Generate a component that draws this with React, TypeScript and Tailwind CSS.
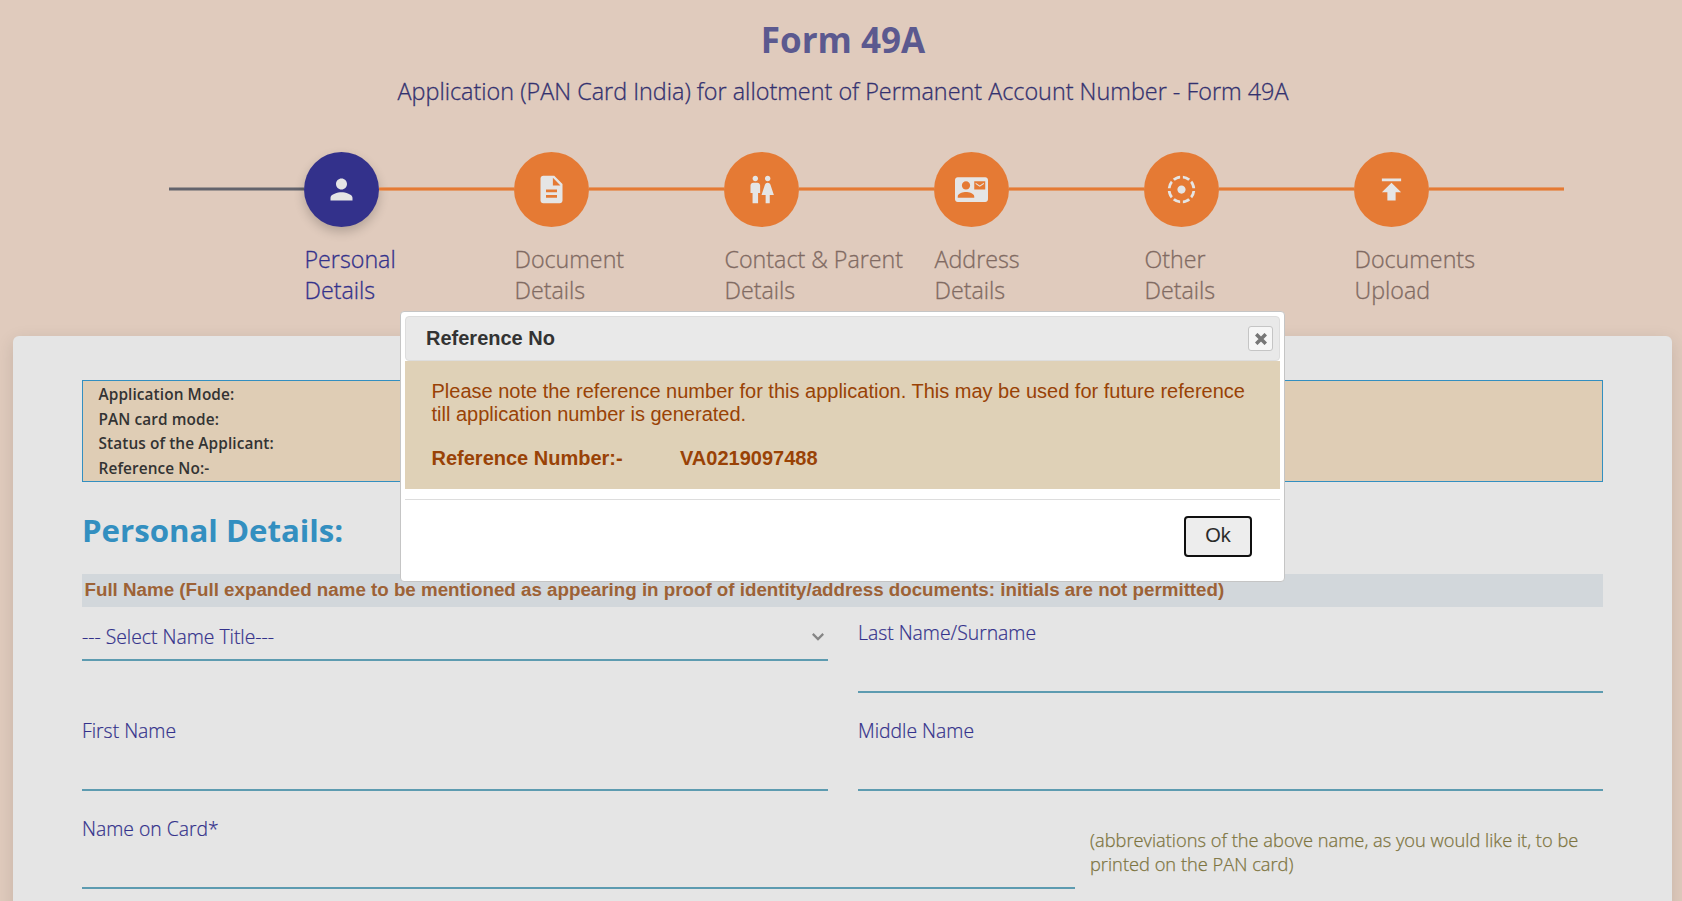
import React from "react";
import {
  MdContactMail,
  MdDescription,
  MdFilterTiltShift,
  MdPerson,
  MdPublish,
  MdWc,
} from "react-icons/md";

const steps = [
  { icon: MdPerson, top: "Personal", bottom: "Details" },
  { icon: MdDescription, top: "Document", bottom: "Details" },
  { icon: MdWc, top: "Contact & Parent", bottom: "Details" },
  { icon: MdContactMail, top: "Address", bottom: "Details" },
  { icon: MdFilterTiltShift, top: "Other", bottom: "Details" },
  { icon: MdPublish, top: "Documents", bottom: "Upload" },
];

const summary = ["Application Mode:", "PAN card mode:", "Status of the Applicant:", "Reference No:-"];

function Stepper() {
  return (
    <div className="mt-[45px] ml-[169px] flex w-[1395px]">
      <div className="mt-[35px] h-[4px] w-[135px] shrink-0 border-y border-[#a09794] bg-[#63636c]" />
      {steps.map(({ icon: Icon, top, bottom }, i) => (
        <div key={top} className="w-[210px] shrink-0">
          <div className="flex items-start">
            <div
              className={
                i === 0
                  ? "flex size-[75px] shrink-0 items-center justify-center rounded-full bg-[#33318b] shadow-[0_5px_11px_rgba(0,0,0,0.2)]"
                  : "flex size-[75px] shrink-0 items-center justify-center rounded-full bg-[#e57a34]"
              }
            >
              <Icon className="size-[33px] text-[#e5e5e5]" />
            </div>
            <div className="mt-[35px] h-[4px] w-[135px] shrink-0 border-y border-[#e39c6c] bg-[#e57a34]" />
          </div>
          <div
            className={
              i === 0
                ? "mt-[17px] -mb-px pl-[0.5px] text-[23.25px] leading-[31px] font-light whitespace-nowrap text-[#33318b] [-webkit-text-stroke:0.3px]"
                : "mt-[17px] -mb-px pl-[0.5px] text-[23.25px] leading-[31px] font-light whitespace-nowrap text-[#806a62] [-webkit-text-stroke:0.3px]"
            }
          >
            {top}
            <br />
            {bottom}
          </div>
        </div>
      ))}
    </div>
  );
}

function Field({ label, width }: { label: string; width: string }) {
  return (
    <div className={`${width} h-[98px]`}>
      <div className="h-[86px] border-b-2 border-[#5d9bb0] pt-[12px] text-[19.35px] leading-7 font-light text-[#33318b] [-webkit-text-stroke:0.2px]">
        {label}
      </div>
    </div>
  );
}

function ReferenceDialog() {
  return (
    <div className="absolute top-[311px] left-[400px] h-[271px] w-[885px] rounded-[4px] border border-[#c5c5c5] bg-white p-[4px] font-['Liberation_Sans',Arial,sans-serif]">
      <div className="flex h-[45px] items-center justify-between rounded-[4px] border border-[#dddddd] bg-[#e9e9e9] pr-[6px] pl-[20px]">
        <span className="pb-[2px] text-[20px] leading-6 font-bold text-[#333333]">Reference No</span>
        <button className="flex size-[25px] items-center justify-center rounded-[3px] border border-[#c5c5c5] bg-[#f6f6f6]">
          <svg viewBox="0 0 12 12" className="size-3" fill="none" stroke="#777777" strokeWidth="3.6">
            <path d="M1.2 1.2 10.8 10.8M10.8 1.2 1.2 10.8" />
          </svg>
        </button>
      </div>
      <div className="h-[128px] bg-[#dfd1b7] pt-[19px] pl-[26.5px] text-[#994206]">
        <p className="text-[20px] leading-[23px]">
          Please note the reference number for this application. This may be used for future reference
          <br />
          till application number is generated.
        </p>
        <p className="mt-[21px] flex text-[20px] leading-[23px] font-bold">
          <span className="w-[248.5px]">Reference Number:-</span>
          <span>VA0219097488</span>
        </p>
      </div>
      <div className="mt-[10px] flex justify-end border-t border-[#dddddd] pt-[16px] pr-[28px]">
        <button className="h-[41px] w-[68px] rounded-[4px] border-2 border-[#101010] bg-[#ededed] pb-[3px] text-[20px] leading-6 text-[#2b2b2b]">
          Ok
        </button>
      </div>
    </div>
  );
}

export default function App() {
  return (
    <div className="relative h-[901px] w-[1682px] overflow-hidden bg-[#e0cbbd] font-['Open_Sans',sans-serif]">
      <h1 className="mt-[16px] pl-1 text-center text-[35px] leading-[48px] font-bold text-[#5b598f]">Form 49A</h1>
      <p className="mt-[11px] pl-1 text-center text-[23.38px] leading-8 font-light text-[#33316f] [-webkit-text-stroke:0.3px]">
        Application (PAN Card India) for allotment of Permanent Account Number - Form 49A
      </p>
      <Stepper />

      <main className="mt-[31px] ml-[13px] h-[640px] w-[1659px] rounded-t-[6px] bg-[#e5e5e5] px-[69px] pt-[44px] shadow-[0_5px_18px_rgba(0,0,0,0.12)]">
        <div className="h-[102px] border border-[#338fc0] bg-[#dfcdb5] pt-[2px] pl-[15.5px] text-[15.4px] leading-[24.5px] font-semibold tracking-[0.09px] text-[#333333]">
          {summary.map((line) => (
            <div key={line}>{line}</div>
          ))}
        </div>
        <h2 className="mt-[28.5px] text-[31.2px] leading-[39.5px] font-bold text-[#338fc0]">Personal Details:</h2>
        <div className="mt-6 h-[33px] bg-[#d2d7db] pl-[2.5px] font-['Liberation_Sans',Arial,sans-serif] text-[18.75px] leading-[32px] font-bold whitespace-nowrap text-[#9d6236]">
          Full Name (Full expanded name to be mentioned as appearing in proof of identity/address documents: initials
          are not permitted)
        </div>
        <div className="flex justify-between">
          <div className="h-[98px] w-[746px]">
            <div className="flex h-[54px] justify-between border-b-2 border-[#5d9bb0] pt-[16px] pr-1 text-[19.33px] leading-7 font-light text-[#33318b] [-webkit-text-stroke:0.2px]">
              <span>--- Select Name Title---</span>
              <svg
                viewBox="0 0 12 8"
                className="mt-[10px] h-2 w-3"
                fill="none"
                stroke="#858585"
                strokeWidth="2.2"
              >
                <path d="M0.8 0.9 6 6.1 11.2 0.9" />
              </svg>
            </div>
          </div>
          <Field label="Last Name/Surname" width="w-[745px]" />
        </div>
        <div className="flex justify-between">
          <Field label="First Name" width="w-[746px]" />
          <Field label="Middle Name" width="w-[745px]" />
        </div>
        <div className="flex">
          <Field label="Name on Card*" width="w-[993px]" />
          <p className="pt-[25px] pl-[15px] text-[18.27px] leading-6 font-light whitespace-nowrap text-[#7d7440] [-webkit-text-stroke:0.25px]">
            (abbreviations of the above name, as you would like it, to be
            <br />
            printed on the PAN card)
          </p>
        </div>
      </main>

      <ReferenceDialog />
    </div>
  );
}
